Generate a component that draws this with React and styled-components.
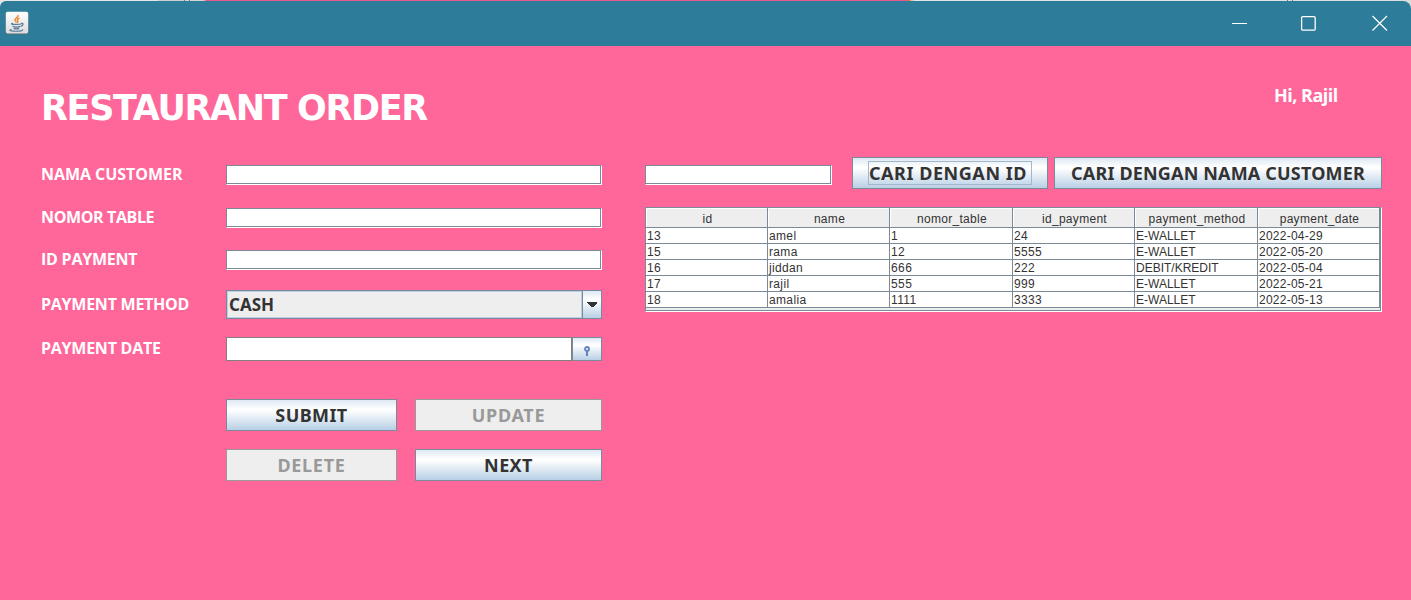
import React from 'react';
import styled, { createGlobalStyle, css } from 'styled-components';

const line = '#7a8a99';
const pink = '#ff6699';
const metal = 'linear-gradient(#dde8f3 0%, #ffffff 30%, #ffffff 34%, #b8cfe5 100%)';

const GlobalStyle = createGlobalStyle`
  * { box-sizing: border-box; }
  html, body { margin: 0; padding: 0; overflow: hidden; background: ${pink}; }
`;

const Window = styled.div`
  width: 1411px;
  height: 600px;
  display: flex;
  flex-direction: column;
  background: ${pink};
  color: #fff;
`;

const Desktop = styled.div`
  height: 46px;
  padding-top: 1px;
  background: linear-gradient(90deg, #e6e6e6 0 158px, #cfcfcf 158px 184px, #777 184px 185px, #d5d5d5 185px 189px, #777 189px 190px, #d5d5d5 190px 203px, #b8bff0 203px 205px, #ff9900 205px 206px, #e8598b 206px 909px, #d9a000 909px 911px, #bccbe0 911px 914px, #e3e3e3 914px 1287px, #777 1287px 1288px, #ddd 1288px 1292px, #777 1292px 1293px, #ddd 1293px);
`;

const TitleBar = styled.header`
  height: 45px;
  padding: 0 23px 2px 5px;
  display: flex;
  align-items: center;
  justify-content: space-between;
  background: #2d7d9a;
  border-radius: 6px 8px 0 0;
`;

const WindowControls = styled.div`
  display: flex;
  align-items: center;
  gap: 53px;
  svg { display: block; }
  svg:last-child { margin-left: 3px; }
`;

const Content = styled.main`
  flex: 1;
  display: flex;
  align-items: flex-start;
  padding: 37px 29px 0 41px;
  gap: 43px;
`;

const FormColumn = styled.section`
  width: 561px;
`;

const Title = styled.h1`
  margin: 0 0 34px;
  height: 48px;
  font: bold 35px/50px 'DejaVu Sans', sans-serif;
  letter-spacing: -1.36px;
  white-space: nowrap;
`;

const FieldRow = styled.div`
  display: flex;
  align-items: center;
  height: ${(p) => p.$height}px;
  margin-bottom: ${(p) => p.$after}px;
`;

const Label = styled.label`
  width: 185px;
  padding-bottom: 2px;
  font: bold 16px/20px 'Open Sans', sans-serif;
  letter-spacing: ${(p) => p.$tracking || 0}px;
  white-space: nowrap;
`;

const TextField = styled.input`
  width: ${(p) => p.$width}px;
  height: 20px;
  padding: 0 3px;
  outline: 0;
  border-radius: 0;
  background: #fff;
  border: 1px solid;
  border-color: ${line} #fff #fff ${line};
  box-shadow: inset -1px -1px 0 ${line};
`;

const Combo = styled.div`
  width: 376px;
  height: 29px;
  display: flex;
  border: 1px solid ${line};
  background: #eee;
  color: #333;
`;

const ComboValue = styled.div`
  flex: 1;
  padding-left: 1px;
  border: 1px solid #b8cfe5;
  font: bold 17px/25px 'Noto Sans', sans-serif;
`;

const ComboArrow = styled.div`
  width: 19px;
  display: flex;
  align-items: center;
  justify-content: center;
  border-left: 1px solid ${line};
  background: ${metal};
`;

const DateField = styled.div`
  width: 376px;
  height: 24px;
  display: flex;
`;

const DateInput = styled.input`
  width: 346px;
  height: 24px;
  padding: 0 3px;
  outline: 0;
  border: 1px solid #808080;
  border-radius: 0;
  background: #fff;
`;

const buttonBase = css`
  padding: 0;
  border: 1px solid ${line};
  border-radius: 0;
  background: ${metal};
  color: #333;
  display: flex;
  align-items: center;
  justify-content: center;
`;

const DateButton = styled.button`
  ${buttonBase}
  width: 30px;
  height: 24px;
  padding-top: 3px;
`;

const Button = styled.button`
  ${buttonBase}
  width: ${(p) => p.$width}px;
  height: 32px;
  font: bold 18px/24px 'Noto Sans', sans-serif;
  letter-spacing: ${(p) => p.$tracking || 0}px;
  white-space: nowrap;
  &:disabled {
    color: #999;
    background: #eee;
    border-color: #999;
  }
`;

const FocusRing = styled.span`
  display: flex;
  align-items: center;
  width: 164px;
  height: 24px;
  border: 1px solid #a3b8cc;
`;

const Actions = styled.div`
  display: grid;
  grid-template-columns: 171px 187px;
  gap: 18px;
  margin: 38px 0 0 185px;
`;

const ResultsColumn = styled.section`
  width: 737px;
  display: flex;
  flex-direction: column;
`;

const Greeting = styled.div`
  align-self: flex-end;
  width: 108px;
  height: 25px;
  margin-bottom: 49px;
  font: bold 18px/24px 'Open Sans', sans-serif;
  letter-spacing: -0.5px;
`;

const SearchBar = styled.div`
  display: flex;
  align-items: center;
  height: 32px;
  margin-bottom: 18px;
  input { margin: 4px 20px 0 0; }
  button + button { margin-left: 6px; }
`;

const TableFrame = styled.div`
  width: 737px;
  height: 105px;
  background: #eee;
  border: 1px solid;
  border-color: ${line} #fff #fff ${line};
  box-shadow: inset -1px -1px 0 ${line};
`;

const Table = styled.table`
  width: 734px;
  table-layout: fixed;
  border-collapse: separate;
  border-spacing: 0;
  color: #333;
  font: 12px/14px 'Liberation Sans', Arial, sans-serif;
`;

const HeadCell = styled.th`
  height: 20px;
  padding: 3px 0 0 2px;
  font-weight: 400;
  letter-spacing: 0.3px;
  background: #eee;
  border-right: 1px solid ${line};
  border-bottom: 1px solid ${line};
  box-shadow: inset 1px 1px 0 #fff;
`;

const Cell = styled.td`
  height: 16px;
  padding: 1px 0 0 1px;
  letter-spacing: ${(p) => p.$tracking}px;
  background: #fff;
  border-right: 1px solid ${line};
  border-bottom: 1px solid ${line};
  white-space: nowrap;
`;

const columns = [
  ['id', 122, 0.3],
  ['name', 122, 0.35],
  ['nomor_table', 123, 0.4],
  ['id_payment', 122, 0.3],
  ['payment_method', 123, 0],
  ['payment_date', 122, 0.25],
];

const orders = [
  ['13', 'amel', '1', '24', 'E-WALLET', '2022-04-29'],
  ['15', 'rama', '12', '5555', 'E-WALLET', '2022-05-20'],
  ['16', 'jiddan', '666', '222', 'DEBIT/KREDIT', '2022-05-04'],
  ['17', 'rajil', '555', '999', 'E-WALLET', '2022-05-21'],
  ['18', 'amalia', '1111', '3333', 'E-WALLET', '2022-05-13'],
];

const JavaIcon = () => (
  <svg width="24" height="24" viewBox="0 0 24 24" fill="none">
    <defs>
      <linearGradient id="tile" x1="0" y1="0" x2="0" y2="1">
        <stop offset="0" stopColor="#fff" />
        <stop offset="1" stopColor="#dcdcdc" />
      </linearGradient>
    </defs>
    <rect x="0.5" y="1" width="23" height="22.5" rx="2" fill="#526d78" />
    <rect x="0.8" y="0.8" width="22.4" height="21.7" rx="1.8" fill="url(#tile)" />
    <path d="M13 4c1 2.600-3.500 3.200-3 5 .1.900 1.300 1.500 1.300 2.600M14.500 7.200c-2.500 1-2.500 1.900-1.700 2.700.4.600.1 1.200-.5 1.800" stroke="#ee8022" strokeWidth="1.400" />
    <path d="M8 12.400c-3 .6-1.300 1.200 3.500 1s5.500-.5 4.500-.9M7.500 15.300c2 .8 6 .8 7.700.1M8.700 17.400c1.700.6 4 .6 5.500 0M16.500 12.100c2.800.2 1.500 2.800-.8 3.300M6.500 18.600c-5 1.200 2.500 1.900 7.500 1.500 3-.2 4.500-.9 3-1.500" stroke="#557b98" strokeWidth="1.200" />
  </svg>
);

const MinimizeIcon = () => (
  <svg width="16" height="16" viewBox="0 0 16 16"><path d="M1 8.500h15" stroke="#fff" /></svg>
);

const MaximizeIcon = () => (
  <svg width="16" height="16" viewBox="0 0 16 16" fill="none"><rect x="1.600" y="1.600" width="13.600" height="13.600" rx="1.200" stroke="#fff" strokeWidth="1.300" /></svg>
);

const CloseIcon = () => (
  <svg width="16" height="16" viewBox="0 0 16 16"><path d="M.5 1l14.500 14.500M15 1L.5 15.500" stroke="#fff" strokeWidth="1.200" /></svg>
);

export default function App() {
  return (
    <Window>
      <GlobalStyle />
      <Desktop>
        <TitleBar>
          <JavaIcon />
          <WindowControls>
            <MinimizeIcon />
            <MaximizeIcon />
            <CloseIcon />
          </WindowControls>
        </TitleBar>
      </Desktop>
      <Content>
        <FormColumn>
          <Title>RESTAURANT ORDER</Title>
          <FieldRow $height={20} $after={23}>
            <Label $tracking={-0.05}>NAMA CUSTOMER</Label>
            <TextField $width={376} />
          </FieldRow>
          <FieldRow $height={20} $after={22}>
            <Label $tracking={-0.38}>NOMOR TABLE</Label>
            <TextField $width={376} />
          </FieldRow>
          <FieldRow $height={20} $after={20}>
            <Label $tracking={-0.24}>ID PAYMENT</Label>
            <TextField $width={376} />
          </FieldRow>
          <FieldRow $height={29} $after={18}>
            <Label $tracking={-0.25}>PAYMENT METHOD</Label>
            <Combo>
              <ComboValue>CASH</ComboValue>
              <ComboArrow>
                <svg width="10" height="5" viewBox="0 0 10 5" shapeRendering="crispEdges"><path d="M0 0h10v1l-4 4h-2l-4-4z" fill="#333" /></svg>
              </ComboArrow>
            </Combo>
          </FieldRow>
          <FieldRow $height={24} $after={0}>
            <Label $tracking={-0.25}>PAYMENT DATE</Label>
            <DateField>
              <DateInput />
              <DateButton>
                <svg width="6" height="10" viewBox="0 0 6 10" fill="none" stroke="#6382bf">
                  <circle cx="3" cy="3" r="2" strokeWidth="1.900" />
                  <path d="M3 5v5" strokeWidth="2" />
                </svg>
              </DateButton>
            </DateField>
          </FieldRow>
          <Actions>
            <Button $width={171} $tracking={0.4}>SUBMIT</Button>
            <Button $width={187} $tracking={0.7} disabled>UPDATE</Button>
            <Button $width={171} $tracking={0.7} disabled>DELETE</Button>
            <Button $width={187} $tracking={0.4}>NEXT</Button>
          </Actions>
        </FormColumn>
        <ResultsColumn>
          <Greeting>Hi, Rajil</Greeting>
          <SearchBar>
            <TextField $width={187} />
            <Button $width={196} $tracking={0.55}><FocusRing>CARI DENGAN ID</FocusRing></Button>
            <Button $width={328} $tracking={0.17}>CARI DENGAN NAMA CUSTOMER</Button>
          </SearchBar>
          <TableFrame>
            <Table>
              <colgroup>
                {columns.map(([name, width]) => <col key={name} width={width} />)}
              </colgroup>
              <thead>
                <tr>{columns.map(([name]) => <HeadCell key={name}>{name}</HeadCell>)}</tr>
              </thead>
              <tbody>
                {orders.map((order) => (
                  <tr key={order[0]}>
                    {order.map((value, i) => <Cell key={columns[i][0]} $tracking={columns[i][2]}>{value}</Cell>)}
                  </tr>
                ))}
              </tbody>
            </Table>
          </TableFrame>
        </ResultsColumn>
      </Content>
    </Window>
  );
}
